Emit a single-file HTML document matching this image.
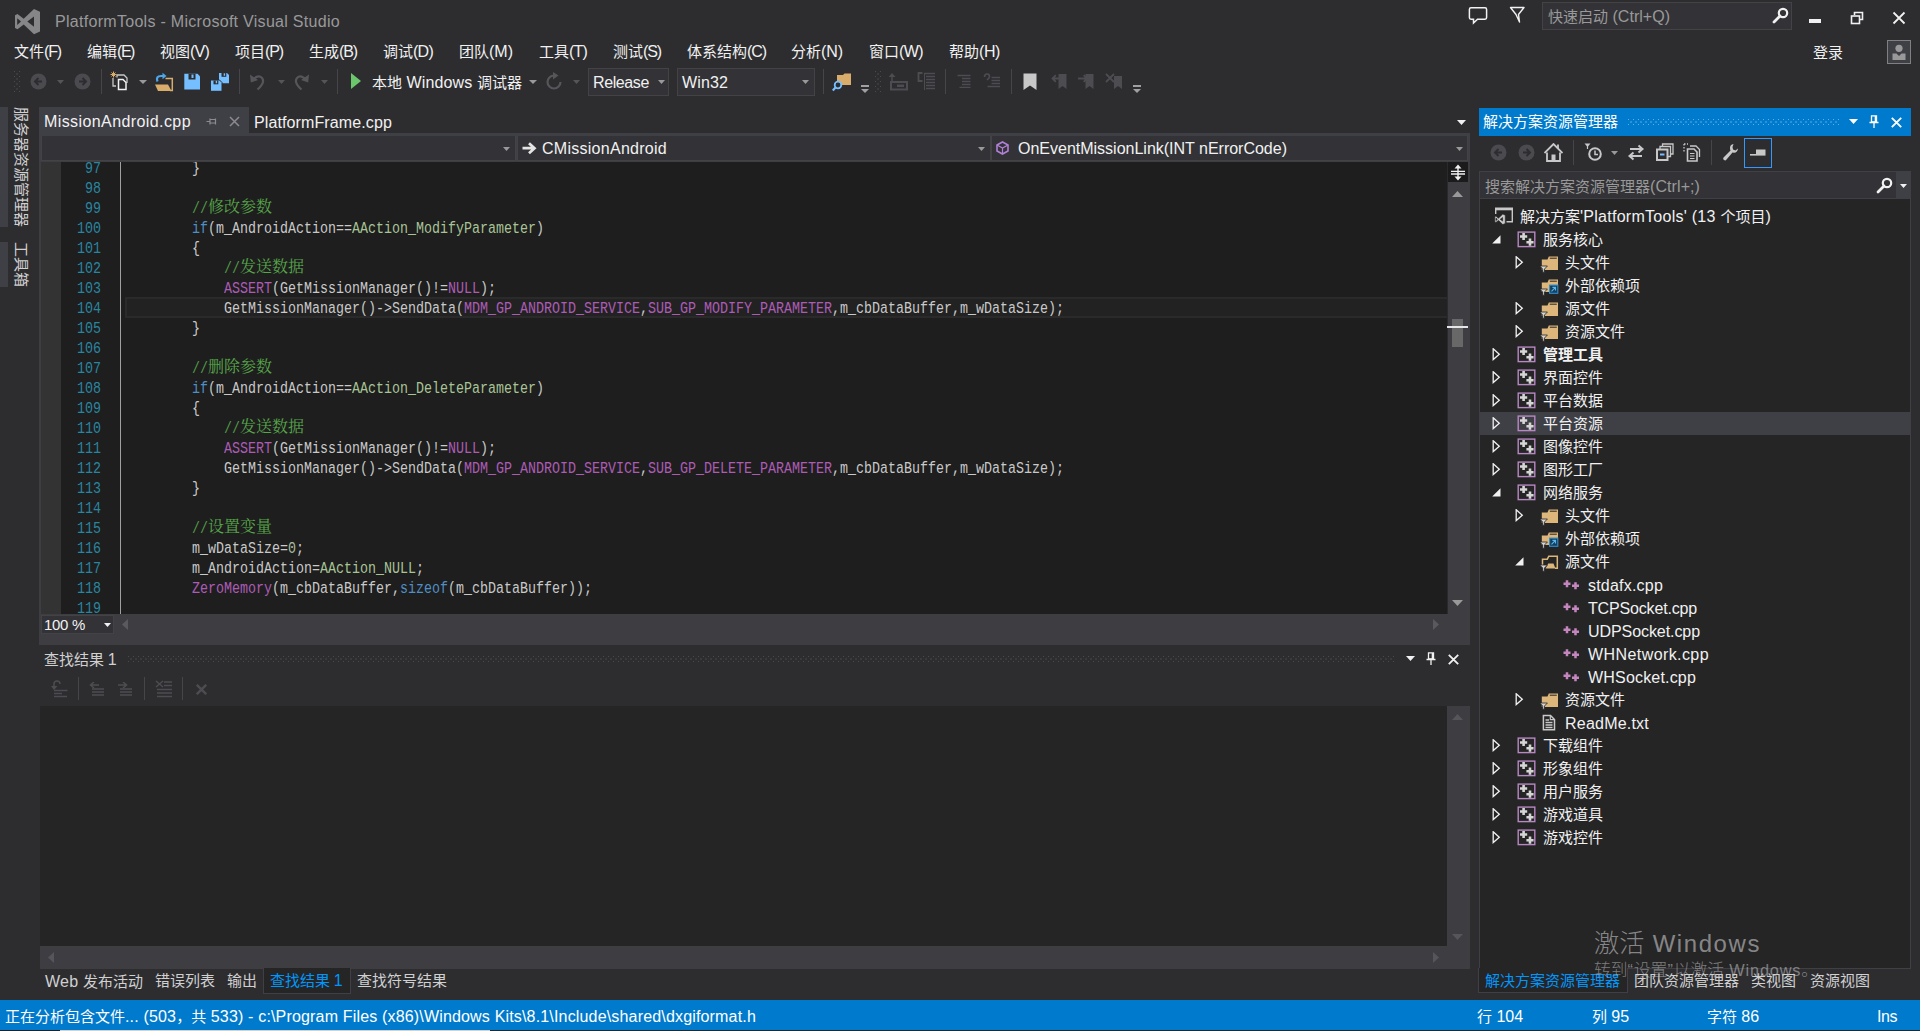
<!DOCTYPE html>
<html lang="zh-CN"><head><meta charset="utf-8"><title>PlatformTools - Microsoft Visual Studio</title>
<style>
html,body{margin:0;padding:0;}
body{width:1920px;height:1031px;overflow:hidden;background:#2d2d30;position:relative;font-family:"Liberation Sans","Noto Sans CJK SC",sans-serif;font-size:15px;color:#f1f1f1;}
div,svg,span.a{position:absolute;box-sizing:border-box;}
.t{white-space:pre;}
.m{white-space:pre;font-family:"Liberation Mono","Noto Sans CJK SC",monospace;font-size:16.667px;line-height:20px;transform-origin:0 50%;transform:scaleX(.8);color:#dcdcdc;opacity:.9;}
.c{white-space:pre;font-family:"Noto Serif CJK SC","Noto Sans CJK SC",serif;font-size:16px;line-height:20px;color:#57a64a;}
.k{color:#569cd6}.p{color:#bd63c5}.e{color:#b8d7a3}.g{color:#57a64a}.n{color:#b5cea8}
</style></head><body>

<svg style="left:14px;top:8px;" width="27" height="27" viewBox="0 0 27 27"><path fill-rule="evenodd" fill="#868689" d="M20 1L26 3.7V23.5L20 26.2L9.7 16.5L3.5 21.2L1 20V7.3L3.5 6L9.7 10.8ZM3.2 10.3V17L7 13.6ZM20 8.5L13.3 13.6L20 18.7Z"/></svg>
<div class="t" style="left:55px;top:10px;line-height:22px;font-size:15px;color:#999;"><span class="l" style="font-size:16.05px;letter-spacing:0.279px">PlatformTools - Microsoft Visual Studio</span></div>
<svg style="left:1468px;top:6px;" width="20" height="20" viewBox="0 0 20 20"><path d="M3 1.8H17Q18.6 1.8 18.6 3.4V11.6Q18.6 13.2 17 13.2H9.5L5.5 17V13.2H3Q1.4 13.2 1.4 11.6V3.4Q1.4 1.8 3 1.8Z" fill="none" stroke="#f1f1f1" stroke-width="1.5"/></svg>
<svg style="left:1509px;top:6px;" width="17" height="18" viewBox="0 0 17 18"><path d="M1.5 1.5H15L9.5 8.5L10.5 16L7 8.5Z" fill="none" stroke="#f1f1f1" stroke-width="1.4" stroke-linejoin="round"/></svg>
<div style="left:1542px;top:2px;width:250px;height:28px;background:#333337;border:1px solid #434346;"></div>
<div class="t" style="left:1548px;top:6px;line-height:20px;font-size:15px;color:#999;">快速启动<span class="l" style="font-size:16.05px;letter-spacing:0.009px"> (Ctrl+Q)</span></div>
<svg style="left:1772px;top:7px;" width="17" height="17" viewBox="0 0 17 17"><circle cx="11" cy="6" r="4.2" fill="none" stroke="#f1f1f1" stroke-width="2.2"/><path d="M8 9L2 15" stroke="#f1f1f1" stroke-width="2.8" stroke-linecap="round"/></svg>
<div style="left:1809px;top:19px;width:12px;height:4px;background:#f1f1f1;"></div>
<svg style="left:1850px;top:11px;" width="14" height="14" viewBox="0 0 14 14"><path d="M4.5 4V1.5H12.5V8.500H10" fill="none" stroke="#f1f1f1" stroke-width="1.6"/><rect x="1.500" y="5" width="8" height="7.500" fill="none" stroke="#f1f1f1" stroke-width="1.6"/></svg>
<svg style="left:1892px;top:11px;" width="14" height="14" viewBox="0 0 14 14"><path d="M1.5 1.5L12.5 12.5M12.5 1.5L1.5 12.5" stroke="#f1f1f1" stroke-width="1.8"/></svg>
<div class="t" style="left:1813px;top:43px;line-height:20px;font-size:15px;color:#f1f1f1;">登录</div>
<div style="left:1887px;top:40px;width:24px;height:24px;background:#3f3f46;border:1px solid #808080;"></div>
<svg style="left:1889px;top:42px;" width="20" height="20" viewBox="0 0 20 20"><circle cx="10" cy="6.3" r="3.6" fill="#999"/><path d="M3.5 18V11.500H7.500L10 14L12.5 11.500H16.5V18Z" fill="#999"/></svg>
<div class="t" style="left:14px;top:41px;line-height:20px;font-size:15px;color:#f1f1f1;">文件<span class="l" style="font-size:16.05px;letter-spacing:-1.167px">(F)</span></div>
<div class="t" style="left:87px;top:41px;line-height:20px;font-size:15px;color:#f1f1f1;">编辑<span class="l" style="font-size:16.05px;letter-spacing:-1.464px">(E)</span></div>
<div class="t" style="left:160px;top:41px;line-height:20px;font-size:15px;color:#f1f1f1;">视图<span class="l" style="font-size:16.05px;letter-spacing:-0.797px">(V)</span></div>
<div class="t" style="left:235px;top:41px;line-height:20px;font-size:15px;color:#f1f1f1;">项目<span class="l" style="font-size:16.05px;letter-spacing:-1.13px">(P)</span></div>
<div class="t" style="left:309px;top:41px;line-height:20px;font-size:15px;color:#f1f1f1;">生成<span class="l" style="font-size:16.05px;letter-spacing:-1.13px">(B)</span></div>
<div class="t" style="left:383px;top:41px;line-height:20px;font-size:15px;color:#f1f1f1;">调试<span class="l" style="font-size:16.05px;letter-spacing:-0.76px">(D)</span></div>
<div class="t" style="left:459px;top:41px;line-height:20px;font-size:15px;color:#f1f1f1;">团队<span class="l" style="font-size:16.05px;letter-spacing:-0.016px">(M)</span></div>
<div class="t" style="left:539px;top:41px;line-height:20px;font-size:15px;color:#f1f1f1;">工具<span class="l" style="font-size:16.05px;letter-spacing:-0.833px">(T)</span></div>
<div class="t" style="left:613px;top:41px;line-height:20px;font-size:15px;color:#f1f1f1;">测试<span class="l" style="font-size:16.05px;letter-spacing:-1.13px">(S)</span></div>
<div class="t" style="left:687px;top:41px;line-height:20px;font-size:15px;color:#f1f1f1;">体系结构<span class="l" style="font-size:16.05px;letter-spacing:-1.094px">(C)</span></div>
<div class="t" style="left:791px;top:41px;line-height:20px;font-size:15px;color:#f1f1f1;">分析<span class="l" style="font-size:16.05px;letter-spacing:-0.094px">(N)</span></div>
<div class="t" style="left:869px;top:41px;line-height:20px;font-size:15px;color:#f1f1f1;">窗口<span class="l" style="font-size:16.05px;letter-spacing:-0.609px">(W)</span></div>
<div class="t" style="left:949px;top:41px;line-height:20px;font-size:15px;color:#f1f1f1;">帮助<span class="l" style="font-size:16.05px;letter-spacing:-0.427px">(H)</span></div>
<svg style="left:14px;top:71px;shape-rendering:crispEdges;" width="6" height="21" viewBox="0 0 6 21"><defs><pattern id="gp1" width="5" height="5" patternUnits="userSpaceOnUse"><rect width="1" height="1" fill="#4a4a4f"/><rect x="2" y="2" width="2" height="2" fill="#4a4a4f" opacity=".45"/></pattern></defs><rect width="6" height="21" fill="url(#gp1)"/></svg>
<svg style="left:29.5px;top:73.0px;" width="17" height="17" viewBox="0 0 17 17"><circle cx="8.5" cy="8.5" r="8" fill="#4b4b4f"/><path d="M12 8.5H5.5M8.5 5L5 8.5L8.5 12" fill="none" stroke="#2d2d30" stroke-width="2"/></svg>
<svg style="left:56.5px;top:80.0px;" width="7" height="4" viewBox="0 0 7 4"><path d="M0 0H7L3.5 4Z" fill="#555558"/></svg>
<svg style="left:73.5px;top:73.0px;" width="17" height="17" viewBox="0 0 17 17"><circle cx="8.5" cy="8.5" r="8" fill="#4b4b4f"/><path d="M5 8.5H11.5M8.5 5L12 8.5L8.5 12" fill="none" stroke="#2d2d30" stroke-width="2"/></svg>
<div style="left:101px;top:69px;width:1px;height:25px;background:#46464a;"></div>
<svg style="left:110px;top:71px;" width="20" height="20" viewBox="0 0 20 20"><path d="M3 7V15H6" fill="none" stroke="#c8c8c8" stroke-width="1.3"/><path d="M7 6.500V4H14L17 7V12" fill="none" stroke="#c8c8c8" stroke-width="1.3"/><path d="M8.500 8.500H13L16 11.500V18.500H8.500Z" fill="none" stroke="#f1f1f1" stroke-width="1.5"/><path d="M3.500 0.500V6.500M0.500 3.500H6.500M1.500 1.500L5.500 5.500M5.500 1.500L1.500 5.500" stroke="#d8ac6a" stroke-width="1"/></svg>
<svg style="left:139.0px;top:79.5px;" width="8" height="4" viewBox="0 0 8 4"><path d="M0 0H8L4.0 4Z" fill="#999"/></svg>
<svg style="left:154px;top:71px;" width="20" height="21" viewBox="0 0 20 21"><path d="M11.500 7.500H18.300V19.500H16" fill="none" stroke="#d8ac6a" stroke-width="1.500"/><path d="M1 13.500H14L17.500 20H4Z" fill="#d8ac6a"/><path d="M3.500 10.500Q1.500 5 7 5H9.500" fill="none" stroke="#4ea6ea" stroke-width="2.200"/><path d="M8.500 1.800L12.500 5L8.500 8.200Z" fill="#4ea6ea"/></svg>
<svg style="left:184px;top:73px;" width="17" height="17" viewBox="0 0 17 17"><path d="M0.300 0.800H13.500L16 3.300V16.500H0.300Z" fill="#75beff"/><rect x="4.500" y="0.800" width="7" height="5.700" fill="#2d2d30"/><rect x="7.500" y="1.500" width="2" height="3.500" fill="#75beff"/></svg>
<svg style="left:210px;top:71px;" width="20" height="20" viewBox="0 0 20 20"><path d="M9 2H17L19 4V12.300H9Z" fill="#75beff"/><rect x="11.500" y="2" width="4.800" height="3.800" fill="#2d2d30"/><rect x="13.700" y="2.300" width="1.400" height="2.500" fill="#75beff"/><path d="M0.500 9H9.500L12 11.500V20.300H0.500Z" fill="#75beff" stroke="#2d2d30" stroke-width="1"/><rect x="3.500" y="9.500" width="4.800" height="3.800" fill="#2d2d30"/><rect x="5.700" y="9.800" width="1.400" height="2.500" fill="#75beff"/></svg>
<div style="left:239px;top:69px;width:1px;height:25px;background:#46464a;"></div>
<svg style="left:249px;top:72px;" width="17" height="19" viewBox="0 0 17 19"><path d="M3 8.500Q9 2 13 6Q16.5 10.500 8.500 17.500" fill="none" stroke="#55555a" stroke-width="2.200"/><path d="M1 2.500L1.800 10.500L9 8Z" fill="#55555a"/></svg>
<svg style="left:277.5px;top:80.0px;" width="7" height="4" viewBox="0 0 7 4"><path d="M0 0H7L3.5 4Z" fill="#555558"/></svg>
<svg style="left:293px;top:72px;" width="17" height="19" viewBox="0 0 17 19"><path d="M14 8.500Q8 2 4 6Q0.500 10.500 8.500 17.500" fill="none" stroke="#55555a" stroke-width="2.200"/><path d="M16 2.500L15.200 10.500L8 8Z" fill="#55555a"/></svg>
<svg style="left:320.5px;top:80.0px;" width="7" height="4" viewBox="0 0 7 4"><path d="M0 0H7L3.5 4Z" fill="#555558"/></svg>
<div style="left:337px;top:69px;width:1px;height:25px;background:#46464a;"></div>
<svg style="left:350px;top:72px;" width="12" height="18" viewBox="0 0 12 18"><path d="M1 1L11 9L1 17Z" fill="#6cc66c"/></svg>
<div class="t" style="left:372px;top:72px;line-height:20px;font-size:15px;color:#f1f1f1;">本地<span class="l" style="font-size:16.05px;letter-spacing:0.113px"> Windows </span>调试器</div>
<svg style="left:528.5px;top:79.5px;" width="8" height="4" viewBox="0 0 8 4"><path d="M0 0H8L4.0 4Z" fill="#999"/></svg>
<svg style="left:545px;top:72px;" width="18" height="19" viewBox="0 0 18 19"><path d="M9 3.500A6.500 6.500 0 1 0 15.500 10" fill="none" stroke="#55555a" stroke-width="2.200"/><path d="M8 0L13.500 3.500L8 7.500Z" fill="#55555a"/></svg>
<svg style="left:572.5px;top:80.0px;" width="7" height="4" viewBox="0 0 7 4"><path d="M0 0H7L3.5 4Z" fill="#555558"/></svg>
<div style="left:588px;top:68px;width:81px;height:28px;background:#333337;border:1px solid #434346;"></div>
<div class="t" style="left:593px;top:72px;line-height:20px;font-size:15px;color:#f1f1f1;"><span class="l" style="font-size:16.05px;letter-spacing:-0.404px">Release</span></div>
<svg style="left:657.5px;top:80.0px;" width="7" height="4" viewBox="0 0 7 4"><path d="M0 0H7L3.5 4Z" fill="#999"/></svg>
<div style="left:677px;top:68px;width:138px;height:28px;background:#333337;border:1px solid #434346;"></div>
<div class="t" style="left:682px;top:72px;line-height:20px;font-size:15px;color:#f1f1f1;"><span class="l" style="font-size:16.05px;letter-spacing:0.109px">Win32</span></div>
<svg style="left:801.5px;top:80.0px;" width="7" height="4" viewBox="0 0 7 4"><path d="M0 0H7L3.5 4Z" fill="#999"/></svg>
<div style="left:823px;top:69px;width:1px;height:25px;background:#46464a;"></div>
<svg style="left:832px;top:71px;" width="21" height="21" viewBox="0 0 21 21"><path d="M5 4H11L12.5 2.500H19V14H5Z" fill="#d8ac6a"/><circle cx="6" cy="14" r="3.300" fill="#2d2d30" stroke="#75beff" stroke-width="1.800"/><path d="M3.500 16.500L0.800 19.500" stroke="#75beff" stroke-width="2.200"/></svg>
<div style="left:861px;top:85px;width:8px;height:1.5px;background:#a0a0a0;"></div>
<svg style="left:861.0px;top:88.5px;" width="8" height="4" viewBox="0 0 8 4"><path d="M0 0H8L4.0 4Z" fill="#a0a0a0"/></svg>
<svg style="left:875px;top:71px;shape-rendering:crispEdges;" width="6" height="21" viewBox="0 0 6 21"><defs><pattern id="gp2" width="5" height="5" patternUnits="userSpaceOnUse"><rect width="1" height="1" fill="#4a4a4f"/><rect x="2" y="2" width="2" height="2" fill="#4a4a4f" opacity=".45"/></pattern></defs><rect width="6" height="21" fill="url(#gp2)"/></svg>
<svg style="left:889px;top:73px;" width="19" height="18" viewBox="0 0 19 18"><path d="M3 0L6.500 4H-0.500Z" fill="#4d4d51"/><path d="M3 4V9" stroke="#4d4d51" stroke-width="1.500"/><rect x="2" y="9" width="16" height="7.500" fill="none" stroke="#4d4d51" stroke-width="2"/><rect x="8" y="11.500" width="7" height="2.500" fill="#4d4d51"/></svg>
<svg style="left:917px;top:72px;" width="19" height="19" viewBox="0 0 19 19"><path d="M5.500 1H1.500V9H5.500" fill="none" stroke="#4d4d51" stroke-width="1.800"/><path d="M7 1.500H18M9 4.500H18M9 7.500H18M9 10.500H18M9 13.500H18M9 16.500H18" stroke="#4d4d51" stroke-width="1.300"/><path d="M7.500 1V18" stroke="#4d4d51" stroke-width="1"/></svg>
<div style="left:945px;top:69px;width:1px;height:25px;background:#46464a;"></div>
<svg style="left:957px;top:74px;" width="15" height="14" viewBox="0 0 15 14"><path d="M0.500 1.500H13.500M5 4.500H13.500M5 7.500H13.500M5 10.500H13.500M2.500 13.500H13.500" stroke="#4d4d51" stroke-width="1.300"/></svg>
<svg style="left:983px;top:73px;" width="18" height="16" viewBox="0 0 18 16"><path d="M1.500 4Q1.500 1 4 1Q6.500 1 6.500 3.500Q6.500 5 4 7" fill="none" stroke="#4d4d51" stroke-width="1.600"/><path d="M8.500 4.500H17M8.500 7.500H17M8.500 10.500H17M4.500 13.500H17" stroke="#4d4d51" stroke-width="1.300"/></svg>
<div style="left:1011px;top:69px;width:1px;height:25px;background:#46464a;"></div>
<svg style="left:1023px;top:73px;" width="14" height="18" viewBox="0 0 14 18"><path d="M0.500 0.500H13.500V17L7 12.500L0.500 17Z" fill="#c8c8c8"/></svg>
<svg style="left:1051px;top:73px;" width="17" height="17" viewBox="0 0 17 17"><path d="M7.500 1H15.500V16L11.500 13L7.500 16Z" fill="#4d4d51"/><path d="M10 5.500H1.500M4.800 2.200L1.500 5.500L4.800 8.800" fill="none" stroke="#4d4d51" stroke-width="1.800"/><path d="M10 5.500H6" stroke="#2d2d30" stroke-width="0"/></svg>
<svg style="left:1077px;top:73px;" width="18" height="17" viewBox="0 0 18 17"><path d="M8.500 1H16.500V16L12.500 13L8.500 16Z" fill="#4d4d51"/><path d="M1 5.500H10M6.700 2.200L10 5.500L6.700 8.800" fill="none" stroke="#4d4d51" stroke-width="1.800"/></svg>
<svg style="left:1105px;top:73px;" width="18" height="17" viewBox="0 0 18 17"><path d="M9 3H17V16L13 13L9 16Z" fill="#4d4d51"/><path d="M1 1L9 9M9 1L1 9" fill="none" stroke="#4d4d51" stroke-width="1.800"/></svg>
<div style="left:1133px;top:85px;width:8px;height:1.5px;background:#a0a0a0;"></div>
<svg style="left:1133.0px;top:88.5px;" width="8" height="4" viewBox="0 0 8 4"><path d="M0 0H8L4.0 4Z" fill="#a0a0a0"/></svg>
<div style="left:0px;top:107px;width:8px;height:120px;background:#3f3f46;"></div>
<div style="left:0px;top:242px;width:8px;height:45px;background:#3f3f46;"></div>
<div class="t" style="left:29px;top:107px;font-size:15px;line-height:16px;color:#d0d0d0;transform-origin:0 0;transform:rotate(90deg);">服务器资源管理器</div>
<div class="t" style="left:29px;top:242px;font-size:15px;line-height:16px;color:#d0d0d0;transform-origin:0 0;transform:rotate(90deg);">工具箱</div>
<div style="left:39px;top:107px;width:210px;height:26px;background:#3f3f46;"></div>
<div style="left:39px;top:133px;width:1431px;height:3px;background:#3f3f46;"></div>
<div class="t" style="left:44px;top:111px;line-height:20px;font-size:15px;color:#f1f1f1;"><span class="l" style="font-size:16.05px;letter-spacing:0.394px">MissionAndroid.cpp</span></div>
<svg style="left:206px;top:116px;" width="11" height="11" viewBox="0 0 11 11"><path d="M0.500 5.500H4M4 2.500V8.500M4 3.500H9.500V7H4M9.500 2.500V8.500" fill="none" stroke="#8b8b90" stroke-width="1.200"/></svg>
<svg style="left:229px;top:116px;" width="11" height="11" viewBox="0 0 11 11"><path d="M1 1L10 10M10 1L1 10" stroke="#8b8b90" stroke-width="1.500"/></svg>
<div class="t" style="left:254px;top:112px;line-height:20px;font-size:15px;color:#f1f1f1;"><span class="l" style="font-size:16.05px;letter-spacing:0.099px">PlatformFrame.cpp</span></div>
<svg style="left:1456.5px;top:120.0px;" width="9" height="5" viewBox="0 0 9 5"><path d="M0 0H9L4.5 5Z" fill="#f1f1f1"/></svg>
<div style="left:39px;top:136px;width:1431px;height:25px;background:#3f3f46;"></div>
<div style="left:41px;top:136px;width:475px;height:25px;background:#333337;border:1px solid #434346;border-top:none;"></div>
<div style="left:517px;top:136px;width:474px;height:25px;background:#333337;border:1px solid #434346;border-top:none;"></div>
<div style="left:991px;top:136px;width:477px;height:25px;background:#333337;border:1px solid #434346;border-top:none;"></div>
<svg style="left:502.5px;top:147.0px;" width="7" height="4" viewBox="0 0 7 4"><path d="M0 0H7L3.5 4Z" fill="#999"/></svg>
<svg style="left:977.5px;top:147.0px;" width="7" height="4" viewBox="0 0 7 4"><path d="M0 0H7L3.5 4Z" fill="#999"/></svg>
<svg style="left:1455.5px;top:147.0px;" width="7" height="4" viewBox="0 0 7 4"><path d="M0 0H7L3.5 4Z" fill="#999"/></svg>
<svg style="left:522px;top:142px;" width="15" height="13" viewBox="0 0 15 13"><path d="M0.500 6.200H12M7 1.200L12.500 6.200L7 11.200" fill="none" stroke="#e4e4e4" stroke-width="2.700"/></svg>
<div class="t" style="left:542px;top:138px;line-height:20px;font-size:15px;color:#f1f1f1;"><span class="l" style="font-size:16.05px;letter-spacing:0.254px">CMissionAndroid</span></div>
<svg style="left:996px;top:141px;" width="13" height="14" viewBox="0 0 13 14"><path d="M6.500 1L12 4V10L6.500 13L1 10V4Z" fill="none" stroke="#b180d7" stroke-width="1.600"/><path d="M1 4L6.500 7L12 4M6.500 7V13" fill="none" stroke="#b180d7" stroke-width="1.200"/></svg>
<div class="t" style="left:1018px;top:138px;line-height:20px;font-size:15px;color:#f1f1f1;"><span class="l" style="font-size:16.05px;letter-spacing:-0.02px">OnEventMissionLink(INT nErrorCode)</span></div>
<div style="left:39px;top:161px;width:1431px;height:484px;background:#3e3e42;"></div>
<div style="left:41px;top:162px;width:1406px;height:452px;background:#1e1e1e;"></div>
<div style="left:41px;top:162px;width:20px;height:452px;background:#333333;"></div>
<div style="left:120px;top:162px;width:1px;height:452px;background:#a0a0a0;"></div>
<div style="left:125px;top:297px;width:1322px;height:21px;background:#222222;border:2px solid #2a2a2a;border-right:none;"></div>
<div style="left:41px;top:162px;width:1406px;height:452px;overflow:hidden;">
<div class="m" style="left:44px;top:-3.5px;color:#2b91af;">97</div>
<div class="m" style="left:151px;top:-3.5px;">}</div>
<div class="m" style="left:44px;top:16.5px;color:#2b91af;">98</div>
<div class="m" style="left:44px;top:36.5px;color:#2b91af;">99</div>
<div class="m g" style="left:151px;top:36.5px;">//</div>
<div class="c" style="left:167px;top:33.5px;">修改参数</div>
<div class="m" style="left:36px;top:56.5px;color:#2b91af;">100</div>
<div class="m k" style="left:151px;top:56.5px;">if</div>
<div class="m" style="left:167px;top:56.5px;">(m_AndroidAction==</div>
<div class="m e" style="left:311px;top:56.5px;">AAction_ModifyParameter</div>
<div class="m" style="left:495px;top:56.5px;">)</div>
<div class="m" style="left:36px;top:76.5px;color:#2b91af;">101</div>
<div class="m" style="left:151px;top:76.5px;">{</div>
<div class="m" style="left:36px;top:96.5px;color:#2b91af;">102</div>
<div class="m g" style="left:183px;top:96.5px;">//</div>
<div class="c" style="left:199px;top:93.5px;">发送数据</div>
<div class="m" style="left:36px;top:116.5px;color:#2b91af;">103</div>
<div class="m p" style="left:183px;top:116.5px;">ASSERT</div>
<div class="m" style="left:231px;top:116.5px;">(GetMissionManager()!=</div>
<div class="m p" style="left:407px;top:116.5px;">NULL</div>
<div class="m" style="left:439px;top:116.5px;">);</div>
<div class="m" style="left:36px;top:136.5px;color:#2b91af;">104</div>
<div class="m" style="left:183px;top:136.5px;">GetMissionManager()-&gt;SendData(</div>
<div class="m p" style="left:423px;top:136.5px;">MDM_GP_ANDROID_SERVICE</div>
<div class="m" style="left:599px;top:136.5px;">,</div>
<div class="m p" style="left:607px;top:136.5px;">SUB_GP_MODIFY_PARAMETER</div>
<div class="m" style="left:791px;top:136.5px;">,m_cbDataBuffer,m_wDataSize);</div>
<div class="m" style="left:36px;top:156.5px;color:#2b91af;">105</div>
<div class="m" style="left:151px;top:156.5px;">}</div>
<div class="m" style="left:36px;top:176.5px;color:#2b91af;">106</div>
<div class="m" style="left:36px;top:196.5px;color:#2b91af;">107</div>
<div class="m g" style="left:151px;top:196.5px;">//</div>
<div class="c" style="left:167px;top:193.5px;">删除参数</div>
<div class="m" style="left:36px;top:216.5px;color:#2b91af;">108</div>
<div class="m k" style="left:151px;top:216.5px;">if</div>
<div class="m" style="left:167px;top:216.5px;">(m_AndroidAction==</div>
<div class="m e" style="left:311px;top:216.5px;">AAction_DeleteParameter</div>
<div class="m" style="left:495px;top:216.5px;">)</div>
<div class="m" style="left:36px;top:236.5px;color:#2b91af;">109</div>
<div class="m" style="left:151px;top:236.5px;">{</div>
<div class="m" style="left:36px;top:256.5px;color:#2b91af;">110</div>
<div class="m g" style="left:183px;top:256.5px;">//</div>
<div class="c" style="left:199px;top:253.5px;">发送数据</div>
<div class="m" style="left:36px;top:276.5px;color:#2b91af;">111</div>
<div class="m p" style="left:183px;top:276.5px;">ASSERT</div>
<div class="m" style="left:231px;top:276.5px;">(GetMissionManager()!=</div>
<div class="m p" style="left:407px;top:276.5px;">NULL</div>
<div class="m" style="left:439px;top:276.5px;">);</div>
<div class="m" style="left:36px;top:296.5px;color:#2b91af;">112</div>
<div class="m" style="left:183px;top:296.5px;">GetMissionManager()-&gt;SendData(</div>
<div class="m p" style="left:423px;top:296.5px;">MDM_GP_ANDROID_SERVICE</div>
<div class="m" style="left:599px;top:296.5px;">,</div>
<div class="m p" style="left:607px;top:296.5px;">SUB_GP_DELETE_PARAMETER</div>
<div class="m" style="left:791px;top:296.5px;">,m_cbDataBuffer,m_wDataSize);</div>
<div class="m" style="left:36px;top:316.5px;color:#2b91af;">113</div>
<div class="m" style="left:151px;top:316.5px;">}</div>
<div class="m" style="left:36px;top:336.5px;color:#2b91af;">114</div>
<div class="m" style="left:36px;top:356.5px;color:#2b91af;">115</div>
<div class="m g" style="left:151px;top:356.5px;">//</div>
<div class="c" style="left:167px;top:353.5px;">设置变量</div>
<div class="m" style="left:36px;top:376.5px;color:#2b91af;">116</div>
<div class="m" style="left:151px;top:376.5px;">m_wDataSize=</div>
<div class="m n" style="left:247px;top:376.5px;">0</div>
<div class="m" style="left:255px;top:376.5px;">;</div>
<div class="m" style="left:36px;top:396.5px;color:#2b91af;">117</div>
<div class="m" style="left:151px;top:396.5px;">m_AndroidAction=</div>
<div class="m e" style="left:279px;top:396.5px;">AAction_NULL</div>
<div class="m" style="left:375px;top:396.5px;">;</div>
<div class="m" style="left:36px;top:416.5px;color:#2b91af;">118</div>
<div class="m p" style="left:151px;top:416.5px;">ZeroMemory</div>
<div class="m" style="left:231px;top:416.5px;">(m_cbDataBuffer,</div>
<div class="m k" style="left:359px;top:416.5px;">sizeof</div>
<div class="m" style="left:407px;top:416.5px;">(m_cbDataBuffer));</div>
<div class="m" style="left:36px;top:436.5px;color:#2b91af;">119</div>
</div>
<div style="left:1447px;top:162px;width:1px;height:452px;background:#2a2a2c;"></div>
<div style="left:1448px;top:162px;width:20px;height:20px;background:#1b1b1c;"></div>
<svg style="left:1451px;top:164px;" width="14" height="17" viewBox="0 0 14 17"><path d="M7 0.500L10.500 4.500H3.500ZM7 16.500L10.500 12.500H3.500Z" fill="#f1f1f1"/><path d="M7 3V14" stroke="#f1f1f1" stroke-width="1.400"/><path d="M0 7.300H14M0 10H14" stroke="#f1f1f1" stroke-width="1.300"/></svg>
<svg style="left:1452.0px;top:191.0px;" width="11" height="6" viewBox="0 0 11 6"><path d="M0 6H11L5.5 0Z" fill="#999"/></svg>
<svg style="left:1452.0px;top:600.0px;" width="11" height="6" viewBox="0 0 11 6"><path d="M0 0H11L5.5 6Z" fill="#999"/></svg>
<div style="left:1452px;top:319px;width:11px;height:28px;background:#686868;"></div>
<div style="left:1447px;top:326px;width:21px;height:2px;background:#e6e6e6;"></div>
<div style="left:41px;top:615px;width:73px;height:19px;background:#333337;border:1px solid #434346;"></div>
<div class="t" style="left:44px;top:614.5px;line-height:20px;font-size:14px;color:#f1f1f1;"><span class="l" style="font-size:14.98px;letter-spacing:-0.291px">100 %</span></div>
<svg style="left:103.5px;top:623.0px;" width="7" height="4" viewBox="0 0 7 4"><path d="M0 0H7L3.5 4Z" fill="#f1f1f1"/></svg>
<svg style="left:122.0px;top:619.0px;" width="6" height="11" viewBox="0 0 6 11"><path d="M6 0V11L0 5.5Z" fill="#5a5a5e"/></svg>
<svg style="left:1433.0px;top:619.0px;" width="6" height="11" viewBox="0 0 6 11"><path d="M0 0V11L6 5.5Z" fill="#5a5a5e"/></svg>
<div style="left:40px;top:672px;width:1430px;height:34px;background:#2d2d30;"></div>
<div class="t" style="left:44px;top:649px;line-height:20px;font-size:15px;color:#d0d0d0;">查找结果<span class="l" style="font-size:16.05px;letter-spacing:-0.695px"> 1</span></div>
<svg style="left:128px;top:656px;shape-rendering:crispEdges;" width="1266" height="6" viewBox="0 0 1266 6"><defs><pattern id="gp3" width="5" height="5" patternUnits="userSpaceOnUse"><rect width="1" height="1" fill="#4a4a4f"/><rect x="2" y="2" width="2" height="2" fill="#4a4a4f" opacity=".45"/></pattern></defs><rect width="1266" height="6" fill="url(#gp3)"/></svg>
<svg style="left:1406.0px;top:656.0px;" width="9" height="5" viewBox="0 0 9 5"><path d="M0 0H9L4.5 5Z" fill="#f1f1f1"/></svg>
<svg style="left:1426px;top:652px;" width="10" height="13" viewBox="0 0 10 13"><path d="M2.500 0.800H7.500V7H2.500Z" fill="none" stroke="#f1f1f1" stroke-width="1.300"/><path d="M6.500 1V7" stroke="#f1f1f1" stroke-width="1.600"/><path d="M0.500 7.500H9.500M5 7.500V13" stroke="#f1f1f1" stroke-width="1.300"/></svg>
<svg style="left:1447.5px;top:653.5px;" width="11" height="11" viewBox="0 0 11 11"><path d="M0.800 0.800L10.2 10.2M10.2 0.800L0.800 10.2" stroke="#f1f1f1" stroke-width="1.8"/></svg>
<svg style="left:51px;top:680px;" width="17" height="18" viewBox="0 0 17 18"><path d="M9 4Q9 1 6 1Q3 1 3 4V8" fill="none" stroke="#4d4d51" stroke-width="1.500"/><path d="M0 6L3 10L6.500 6Z" fill="#4d4d51"/><path d="M3 10.500H16.500M3 13.500H11M3 16.500H16" stroke="#4d4d51" stroke-width="1.500"/></svg>
<div style="left:78px;top:677px;width:1px;height:23px;background:#46464a;"></div>
<svg style="left:89px;top:682px;" width="16" height="14" viewBox="0 0 16 14"><path d="M10 3H2M5 0L1.500 3L5 6" fill="none" stroke="#4d4d51" stroke-width="1.600"/><path d="M3 7H15M3 10H15M3 13H15" stroke="#4d4d51" stroke-width="1.500"/></svg>
<svg style="left:117px;top:682px;" width="16" height="14" viewBox="0 0 16 14"><path d="M1 3H9M6 0L9.500 3L6 6" fill="none" stroke="#4d4d51" stroke-width="1.600"/><path d="M3 7H15M3 10H15M3 13H15" stroke="#4d4d51" stroke-width="1.500"/></svg>
<div style="left:144px;top:677px;width:1px;height:23px;background:#46464a;"></div>
<svg style="left:155px;top:680px;" width="18" height="18" viewBox="0 0 18 18"><path d="M1 1L8 7M8 1L1 7" stroke="#4d4d51" stroke-width="1.500"/><path d="M9 2H17M9 5.500H17M2 9.500H17M2 13H17M2 16.500H17" stroke="#4d4d51" stroke-width="1.600"/></svg>
<div style="left:182px;top:677px;width:1px;height:23px;background:#46464a;"></div>
<svg style="left:195.5px;top:683.5px;" width="11" height="11" viewBox="0 0 11 11"><path d="M0.800 0.800L10.2 10.2M10.2 0.800L0.800 10.2" stroke="#4d4d51" stroke-width="2.4"/></svg>
<div style="left:40px;top:706px;width:1407px;height:240px;background:#252526;"></div>
<div style="left:1447px;top:706px;width:23px;height:240px;background:#3e3e42;"></div>
<div style="left:40px;top:946px;width:1430px;height:23px;background:#3e3e42;"></div>
<svg style="left:1452.0px;top:713.5px;" width="11" height="6" viewBox="0 0 11 6"><path d="M0 6H11L5.5 0Z" fill="#55555a"/></svg>
<svg style="left:1452.0px;top:933.5px;" width="11" height="6" viewBox="0 0 11 6"><path d="M0 0H11L5.5 6Z" fill="#55555a"/></svg>
<svg style="left:48.0px;top:952.0px;" width="6" height="11" viewBox="0 0 6 11"><path d="M6 0V11L0 5.5Z" fill="#55555a"/></svg>
<svg style="left:1433.0px;top:952.0px;" width="6" height="11" viewBox="0 0 6 11"><path d="M0 0V11L6 5.5Z" fill="#55555a"/></svg>
<div style="left:263px;top:968px;width:88px;height:26px;background:#252526;border:1px solid #3f3f46;border-top:none;"></div>
<div class="t" style="left:45px;top:971px;line-height:20px;font-size:15px;color:#d0d0d0;"><span class="l" style="font-size:16.05px;letter-spacing:0.211px">Web </span>发布活动</div>
<div class="t" style="left:155px;top:971px;line-height:20px;font-size:15px;color:#d0d0d0;">错误列表</div>
<div class="t" style="left:227px;top:971px;line-height:20px;font-size:15px;color:#d0d0d0;">输出</div>
<div class="t" style="left:270px;top:970px;line-height:20px;font-size:15px;color:#0097fb;">查找结果<span class="l" style="font-size:16.05px;letter-spacing:-0.695px"> 1</span></div>
<div class="t" style="left:357px;top:971px;line-height:20px;font-size:15px;color:#d0d0d0;">查找符号结果</div>
<div style="left:1479px;top:108px;width:432px;height:28px;background:#007acc;"></div>
<div class="t" style="left:1483px;top:112px;line-height:20px;font-size:15px;color:#ffffff;">解决方案资源管理器</div>
<svg style="left:1628px;top:119px;shape-rendering:crispEdges;" width="211" height="6" viewBox="0 0 211 6"><defs><pattern id="gp4" width="5" height="5" patternUnits="userSpaceOnUse"><rect width="1" height="1" fill="#5fb0e8"/><rect x="2" y="2" width="2" height="2" fill="#5fb0e8" opacity=".45"/></pattern></defs><rect width="211" height="6" fill="url(#gp4)"/></svg>
<svg style="left:1848.5px;top:119.0px;" width="9" height="5" viewBox="0 0 9 5"><path d="M0 0H9L4.5 5Z" fill="#fff"/></svg>
<svg style="left:1869px;top:115px;" width="10" height="13" viewBox="0 0 10 13"><path d="M2.500 0.800H7.500V7H2.500Z" fill="none" stroke="#fff" stroke-width="1.300"/><path d="M6.500 1V7" stroke="#fff" stroke-width="1.600"/><path d="M0.500 7.500H9.500M5 7.500V13" stroke="#fff" stroke-width="1.300"/></svg>
<svg style="left:1890.5px;top:116.5px;" width="11" height="11" viewBox="0 0 11 11"><path d="M0.800 0.800L10.2 10.2M10.2 0.800L0.800 10.2" stroke="#fff" stroke-width="1.8"/></svg>
<svg style="left:1489.5px;top:144.0px;" width="17" height="17" viewBox="0 0 17 17"><circle cx="8.5" cy="8.5" r="8" fill="#4b4b4f"/><path d="M12 8.5H5.5M8.5 5L5 8.5L8.5 12" fill="none" stroke="#2d2d30" stroke-width="2"/></svg>
<svg style="left:1517.5px;top:144.0px;" width="17" height="17" viewBox="0 0 17 17"><circle cx="8.5" cy="8.5" r="8" fill="#4b4b4f"/><path d="M5 8.5H11.5M8.5 5L12 8.5L8.5 12" fill="none" stroke="#2d2d30" stroke-width="2"/></svg>
<svg style="left:1544px;top:143px;" width="19" height="19" viewBox="0 0 19 19"><path d="M0.500 10L9.500 1L18.500 10" fill="none" stroke="#c8c8c8" stroke-width="1.800"/><path d="M3 9.500V18H16V9.500" fill="none" stroke="#c8c8c8" stroke-width="1.800"/><rect x="7.500" y="11.500" width="4" height="6.500" fill="#c8c8c8"/><path d="M14 1.500V5.500" stroke="#c8c8c8" stroke-width="1.800"/></svg>
<div style="left:1573px;top:140px;width:1px;height:25px;background:#46464a;"></div>
<svg style="left:1584px;top:143px;" width="19" height="19" viewBox="0 0 19 19"><path d="M0.500 0.500H6.500L3.500 4Z" fill="#c8c8c8"/><path d="M3.500 3V6" stroke="#c8c8c8" stroke-width="1.200"/><circle cx="11" cy="11" r="5.800" fill="none" stroke="#c8c8c8" stroke-width="2"/><path d="M11 7.500V11.500H14" fill="none" stroke="#c8c8c8" stroke-width="1.500"/></svg>
<svg style="left:1611.0px;top:150.5px;" width="7" height="4" viewBox="0 0 7 4"><path d="M0 0H7L3.5 4Z" fill="#999"/></svg>
<svg style="left:1627px;top:144px;" width="18" height="17" viewBox="0 0 18 17"><path d="M3 5H15M11.500 1.500L15.500 5L11.500 8.500" fill="none" stroke="#c8c8c8" stroke-width="2"/><path d="M15 12H3M6.500 8.500L2.500 12L6.500 15.500" fill="none" stroke="#c8c8c8" stroke-width="2"/></svg>
<svg style="left:1656px;top:143px;" width="18" height="19" viewBox="0 0 18 19"><path d="M6.500 3.500V1H17V11H14.500" fill="none" stroke="#c8c8c8" stroke-width="1.300"/><path d="M4 6V3.500H14.500V13.500H12" fill="none" stroke="#c8c8c8" stroke-width="1.300"/><rect x="1" y="6.500" width="10.500" height="10.500" fill="none" stroke="#c8c8c8" stroke-width="2"/><rect x="4" y="10.500" width="4.500" height="2" fill="#75beff"/></svg>
<svg style="left:1683px;top:143px;" width="19" height="19" viewBox="0 0 19 19"><path d="M1 1H5M1 1V9" fill="none" stroke="#c8c8c8" stroke-width="1.300" stroke-dasharray="1.500 1.500"/><path d="M7 3H13L16.500 6.500V14" fill="none" stroke="#c8c8c8" stroke-width="1.300"/><path d="M4.500 6H11L14 9V18H4.500Z" fill="none" stroke="#c8c8c8" stroke-width="1.600"/><path d="M7 10.500H11.500M7 13H11.500M7 15.500H11.500" stroke="#c8c8c8" stroke-width="1.200"/></svg>
<div style="left:1711px;top:140px;width:1px;height:25px;background:#46464a;"></div>
<svg style="left:1722px;top:143px;" width="17" height="18" viewBox="0 0 17 18"><path d="M11.500 1Q8 1.500 8 5Q8 6.500 8.500 7.500L1.500 14.500Q0.500 16 2 17Q3.500 18 4.500 16.500L10.500 9.500Q15.500 10.500 16 5.500L13.500 7.500L11 6.500L10.500 4Z" fill="#c8c8c8"/></svg>
<div style="left:1744px;top:138px;width:28px;height:30px;background:#2d2d30;border:1px solid #3399ff;"></div>
<svg style="left:1750px;top:149px;" width="16" height="8" viewBox="0 0 16 8"><rect x="6" y="0.500" width="9.500" height="4.500" fill="#c8c8c8"/><path d="M0 5.800H15.500" stroke="#c8c8c8" stroke-width="1.600"/></svg>
<div style="left:1479px;top:171px;width:432px;height:28px;background:#333337;border:1px solid #3f3f46;"></div>
<div class="t" style="left:1485px;top:176px;line-height:20px;font-size:15px;color:#999;">搜索解决方案资源管理器<span class="l" style="font-size:16.05px;letter-spacing:0.068px">(Ctrl+;)</span></div>
<svg style="left:1876px;top:177px;" width="17" height="17" viewBox="0 0 17 17"><circle cx="11" cy="6" r="4.2" fill="none" stroke="#f1f1f1" stroke-width="2.2"/><path d="M8 9L2 15" stroke="#f1f1f1" stroke-width="2.8" stroke-linecap="round"/></svg>
<div style="left:1896px;top:172px;width:15px;height:26px;background:#3f3f46;"></div>
<svg style="left:1899.5px;top:183.5px;" width="7" height="4" viewBox="0 0 7 4"><path d="M0 0H7L3.5 4Z" fill="#f1f1f1"/></svg>
<div style="left:1479px;top:199px;width:432px;height:770px;background:#252526;border:1px solid #3f3f46;border-top:none;"></div>
<div style="left:1480px;top:412px;width:430px;height:23px;background:#3f3f46;"></div>
<svg style="left:1494px;top:207px;" width="20" height="19" viewBox="0 0 20 19"><rect x="1" y="0.500" width="18" height="2.800" fill="#c8c8c8"/><path d="M18.300 3V14.800H12.500" fill="none" stroke="#c8c8c8" stroke-width="1.400"/><path d="M1.700 3V7" stroke="#c8c8c8" stroke-width="1.400"/><g transform="translate(0.400,6.600) scale(0.420)"><path fill-rule="evenodd" fill="#c8c8c8" stroke="#252526" stroke-width="1.500" d="M20 1L26 3.700V23.500L20 26.200L9.700 16.500L3.500 21.200L1 20V7.300L3.500 6L9.700 10.800ZM3.800 10.800V16.500L7 13.600ZM19.500 9.500L14 13.600L19.500 17.700Z"/></g></svg>
<div class="t" style="left:1520px;top:206px;line-height:20px;font-size:15px;color:#f1f1f1;">解决方案<span class="l" style="font-size:16.05px;letter-spacing:0.253px">'PlatformTools' (13 </span>个项目<span class="l" style="font-size:16.05px;letter-spacing:0.253px">)</span></div>
<svg style="left:1492px;top:235.0px;" width="9" height="9" viewBox="0 0 9 9"><path d="M8.500 0.200V8.500H0.200Z" fill="#f1f1f1"/></svg>
<svg style="left:1517px;top:230.5px;" width="19" height="18" viewBox="0 0 19 18"><rect x="1.200" y="1.100" width="16.600" height="14.500" fill="none" stroke="#b888c4" stroke-width="1.400"/><path d="M6.600 1.900V9.100M3 5.500H10.200" stroke="#d6d6d6" stroke-width="2.600"/><path d="M13 7.600V14.800M9.400 11.200H16.600" stroke="#d6d6d6" stroke-width="2.600"/></svg>
<div class="t" style="left:1543px;top:229.5px;line-height:20px;font-size:15px;color:#f1f1f1;">服务核心</div>
<svg style="left:1514.5px;top:256.0px;" width="9" height="13" viewBox="0 0 9 13"><path d="M1.200 0.800L7.300 6.200L1.200 11.600Z" fill="none" stroke="#f1f1f1" stroke-width="1.300"/></svg>
<svg style="left:1540px;top:253.5px;" width="19" height="19" viewBox="0 0 19 19"><path d="M1.800 5.500H7.500L8.800 2.500H18V16H1.800Z" fill="#dcb67a"/><path d="M9.800 4.200H16.800" stroke="#252526" stroke-width="1"/><path d="M-0.200 12H7.400L4.500 15V18.200H2.700V15Z" fill="#d4d4d4" stroke="#252526" stroke-width=".800"/></svg>
<div class="t" style="left:1565px;top:252.5px;line-height:20px;font-size:15px;color:#f1f1f1;">头文件</div>
<svg style="left:1540px;top:276.5px;" width="19" height="19" viewBox="0 0 19 19"><path d="M1.800 5.500H7.500L8.800 2.500H18V10H1.800Z" fill="#dcb67a"/><path d="M1.800 10H10V15H1.800Z" fill="#dcb67a"/><path d="M9.800 4.200H16.800" stroke="#252526" stroke-width="1"/><rect x="9.600" y="8.100" width="8.200" height="8.200" fill="#163f5a" stroke="#2f8fcf" stroke-width="1.100"/><path d="M11.500 14.300L15.200 10.600M12.400 10.400H15.500V13.500" fill="none" stroke="#5ab4ee" stroke-width="1.100"/><path d="M-0.200 12H7.400L4.500 15V18.200H2.700V15Z" fill="#d4d4d4" stroke="#252526" stroke-width=".800"/></svg>
<div class="t" style="left:1565px;top:275.5px;line-height:20px;font-size:15px;color:#f1f1f1;">外部依赖项</div>
<svg style="left:1514.5px;top:302.0px;" width="9" height="13" viewBox="0 0 9 13"><path d="M1.200 0.800L7.300 6.200L1.200 11.600Z" fill="none" stroke="#f1f1f1" stroke-width="1.300"/></svg>
<svg style="left:1540px;top:299.5px;" width="19" height="19" viewBox="0 0 19 19"><path d="M1.800 5.500H7.500L8.800 2.500H18V16H1.800Z" fill="#dcb67a"/><path d="M9.800 4.200H16.800" stroke="#252526" stroke-width="1"/><path d="M-0.200 12H7.400L4.500 15V18.200H2.700V15Z" fill="#d4d4d4" stroke="#252526" stroke-width=".800"/></svg>
<div class="t" style="left:1565px;top:298.5px;line-height:20px;font-size:15px;color:#f1f1f1;">源文件</div>
<svg style="left:1514.5px;top:325.0px;" width="9" height="13" viewBox="0 0 9 13"><path d="M1.200 0.800L7.300 6.200L1.200 11.600Z" fill="none" stroke="#f1f1f1" stroke-width="1.300"/></svg>
<svg style="left:1540px;top:322.5px;" width="19" height="19" viewBox="0 0 19 19"><path d="M1.800 5.500H7.500L8.800 2.500H18V16H1.800Z" fill="#dcb67a"/><path d="M9.800 4.200H16.800" stroke="#252526" stroke-width="1"/><path d="M-0.200 12H7.400L4.500 15V18.200H2.700V15Z" fill="#d4d4d4" stroke="#252526" stroke-width=".800"/></svg>
<div class="t" style="left:1565px;top:321.5px;line-height:20px;font-size:15px;color:#f1f1f1;">资源文件</div>
<svg style="left:1492px;top:348.0px;" width="9" height="13" viewBox="0 0 9 13"><path d="M1.200 0.800L7.300 6.200L1.200 11.600Z" fill="none" stroke="#f1f1f1" stroke-width="1.300"/></svg>
<svg style="left:1517px;top:345.5px;" width="19" height="18" viewBox="0 0 19 18"><rect x="1.200" y="1.100" width="16.600" height="14.500" fill="none" stroke="#b888c4" stroke-width="1.400"/><path d="M6.600 1.900V9.100M3 5.500H10.200" stroke="#d6d6d6" stroke-width="2.600"/><path d="M13 7.600V14.800M9.400 11.200H16.600" stroke="#d6d6d6" stroke-width="2.600"/></svg>
<div class="t" style="left:1543px;top:344.5px;line-height:20px;font-size:15px;color:#f1f1f1;font-weight:bold;">管理工具</div>
<svg style="left:1492px;top:371.0px;" width="9" height="13" viewBox="0 0 9 13"><path d="M1.200 0.800L7.300 6.200L1.200 11.600Z" fill="none" stroke="#f1f1f1" stroke-width="1.300"/></svg>
<svg style="left:1517px;top:368.5px;" width="19" height="18" viewBox="0 0 19 18"><rect x="1.200" y="1.100" width="16.600" height="14.500" fill="none" stroke="#b888c4" stroke-width="1.400"/><path d="M6.600 1.900V9.100M3 5.500H10.200" stroke="#d6d6d6" stroke-width="2.600"/><path d="M13 7.600V14.800M9.400 11.200H16.600" stroke="#d6d6d6" stroke-width="2.600"/></svg>
<div class="t" style="left:1543px;top:367.5px;line-height:20px;font-size:15px;color:#f1f1f1;">界面控件</div>
<svg style="left:1492px;top:394.0px;" width="9" height="13" viewBox="0 0 9 13"><path d="M1.200 0.800L7.300 6.200L1.200 11.600Z" fill="none" stroke="#f1f1f1" stroke-width="1.300"/></svg>
<svg style="left:1517px;top:391.5px;" width="19" height="18" viewBox="0 0 19 18"><rect x="1.200" y="1.100" width="16.600" height="14.500" fill="none" stroke="#b888c4" stroke-width="1.400"/><path d="M6.600 1.900V9.100M3 5.500H10.200" stroke="#d6d6d6" stroke-width="2.600"/><path d="M13 7.600V14.800M9.400 11.200H16.600" stroke="#d6d6d6" stroke-width="2.600"/></svg>
<div class="t" style="left:1543px;top:390.5px;line-height:20px;font-size:15px;color:#f1f1f1;">平台数据</div>
<svg style="left:1492px;top:417.0px;" width="9" height="13" viewBox="0 0 9 13"><path d="M1.200 0.800L7.300 6.200L1.200 11.600Z" fill="none" stroke="#f1f1f1" stroke-width="1.300"/></svg>
<svg style="left:1517px;top:414.5px;" width="19" height="18" viewBox="0 0 19 18"><rect x="1.200" y="1.100" width="16.600" height="14.500" fill="none" stroke="#b888c4" stroke-width="1.400"/><path d="M6.600 1.900V9.100M3 5.500H10.200" stroke="#d6d6d6" stroke-width="2.600"/><path d="M13 7.600V14.800M9.400 11.200H16.600" stroke="#d6d6d6" stroke-width="2.600"/></svg>
<div class="t" style="left:1543px;top:413.5px;line-height:20px;font-size:15px;color:#f1f1f1;">平台资源</div>
<svg style="left:1492px;top:440.0px;" width="9" height="13" viewBox="0 0 9 13"><path d="M1.200 0.800L7.300 6.200L1.200 11.600Z" fill="none" stroke="#f1f1f1" stroke-width="1.300"/></svg>
<svg style="left:1517px;top:437.5px;" width="19" height="18" viewBox="0 0 19 18"><rect x="1.200" y="1.100" width="16.600" height="14.500" fill="none" stroke="#b888c4" stroke-width="1.400"/><path d="M6.600 1.900V9.100M3 5.500H10.200" stroke="#d6d6d6" stroke-width="2.600"/><path d="M13 7.600V14.800M9.400 11.200H16.600" stroke="#d6d6d6" stroke-width="2.600"/></svg>
<div class="t" style="left:1543px;top:436.5px;line-height:20px;font-size:15px;color:#f1f1f1;">图像控件</div>
<svg style="left:1492px;top:463.0px;" width="9" height="13" viewBox="0 0 9 13"><path d="M1.200 0.800L7.300 6.200L1.200 11.600Z" fill="none" stroke="#f1f1f1" stroke-width="1.300"/></svg>
<svg style="left:1517px;top:460.5px;" width="19" height="18" viewBox="0 0 19 18"><rect x="1.200" y="1.100" width="16.600" height="14.500" fill="none" stroke="#b888c4" stroke-width="1.400"/><path d="M6.600 1.900V9.100M3 5.500H10.200" stroke="#d6d6d6" stroke-width="2.600"/><path d="M13 7.600V14.800M9.400 11.200H16.600" stroke="#d6d6d6" stroke-width="2.600"/></svg>
<div class="t" style="left:1543px;top:459.5px;line-height:20px;font-size:15px;color:#f1f1f1;">图形工厂</div>
<svg style="left:1492px;top:488.0px;" width="9" height="9" viewBox="0 0 9 9"><path d="M8.500 0.200V8.500H0.200Z" fill="#f1f1f1"/></svg>
<svg style="left:1517px;top:483.5px;" width="19" height="18" viewBox="0 0 19 18"><rect x="1.200" y="1.100" width="16.600" height="14.500" fill="none" stroke="#b888c4" stroke-width="1.400"/><path d="M6.600 1.900V9.100M3 5.500H10.200" stroke="#d6d6d6" stroke-width="2.600"/><path d="M13 7.600V14.800M9.400 11.200H16.600" stroke="#d6d6d6" stroke-width="2.600"/></svg>
<div class="t" style="left:1543px;top:482.5px;line-height:20px;font-size:15px;color:#f1f1f1;">网络服务</div>
<svg style="left:1514.5px;top:509.0px;" width="9" height="13" viewBox="0 0 9 13"><path d="M1.200 0.800L7.300 6.200L1.200 11.600Z" fill="none" stroke="#f1f1f1" stroke-width="1.300"/></svg>
<svg style="left:1540px;top:506.5px;" width="19" height="19" viewBox="0 0 19 19"><path d="M1.800 5.500H7.500L8.800 2.500H18V16H1.800Z" fill="#dcb67a"/><path d="M9.800 4.200H16.800" stroke="#252526" stroke-width="1"/><path d="M-0.200 12H7.400L4.500 15V18.200H2.700V15Z" fill="#d4d4d4" stroke="#252526" stroke-width=".800"/></svg>
<div class="t" style="left:1565px;top:505.5px;line-height:20px;font-size:15px;color:#f1f1f1;">头文件</div>
<svg style="left:1540px;top:529.5px;" width="19" height="19" viewBox="0 0 19 19"><path d="M1.800 5.500H7.500L8.800 2.500H18V10H1.800Z" fill="#dcb67a"/><path d="M1.800 10H10V15H1.800Z" fill="#dcb67a"/><path d="M9.800 4.200H16.800" stroke="#252526" stroke-width="1"/><rect x="9.600" y="8.100" width="8.200" height="8.200" fill="#163f5a" stroke="#2f8fcf" stroke-width="1.100"/><path d="M11.500 14.300L15.200 10.600M12.400 10.400H15.500V13.500" fill="none" stroke="#5ab4ee" stroke-width="1.100"/><path d="M-0.200 12H7.400L4.500 15V18.200H2.700V15Z" fill="#d4d4d4" stroke="#252526" stroke-width=".800"/></svg>
<div class="t" style="left:1565px;top:528.5px;line-height:20px;font-size:15px;color:#f1f1f1;">外部依赖项</div>
<svg style="left:1514.5px;top:557.0px;" width="9" height="9" viewBox="0 0 9 9"><path d="M8.500 0.200V8.500H0.200Z" fill="#f1f1f1"/></svg>
<svg style="left:1540px;top:552.5px;" width="19" height="19" viewBox="0 0 19 19"><path d="M2.500 13V6.200H7.300L8.800 3.200H17.300V15.300H15" fill="none" stroke="#dcb67a" stroke-width="1.500"/><path d="M5.500 15.600L8.200 10.500H13.500L15.500 15.600Z" fill="#dcb67a"/><path d="M-0.200 12H7.400L4.500 15V18.200H2.700V15Z" fill="#d4d4d4" stroke="#252526" stroke-width=".800"/></svg>
<div class="t" style="left:1565px;top:551.5px;line-height:20px;font-size:15px;color:#f1f1f1;">源文件</div>
<svg style="left:1563px;top:578.5px;" width="17" height="13" viewBox="0 0 17 13"><path d="M4 1.200V8.200M0.500 4.700H7.500" stroke="#c586c0" stroke-width="2.500"/><path d="M12.500 3.300V10.300M9 6.800H16" stroke="#c586c0" stroke-width="2.500"/></svg>
<div class="t" style="left:1588px;top:574.5px;line-height:20px;font-size:15px;color:#f1f1f1;"><span class="l" style="font-size:16.05px;letter-spacing:0.192px">stdafx.cpp</span></div>
<svg style="left:1563px;top:601.5px;" width="17" height="13" viewBox="0 0 17 13"><path d="M4 1.200V8.200M0.500 4.700H7.500" stroke="#c586c0" stroke-width="2.500"/><path d="M12.500 3.300V10.300M9 6.800H16" stroke="#c586c0" stroke-width="2.500"/></svg>
<div class="t" style="left:1588px;top:597.5px;line-height:20px;font-size:15px;color:#f1f1f1;"><span class="l" style="font-size:16.05px;letter-spacing:-0.183px">TCPSocket.cpp</span></div>
<svg style="left:1563px;top:624.5px;" width="17" height="13" viewBox="0 0 17 13"><path d="M4 1.200V8.200M0.500 4.700H7.500" stroke="#c586c0" stroke-width="2.500"/><path d="M12.500 3.300V10.300M9 6.800H16" stroke="#c586c0" stroke-width="2.500"/></svg>
<div class="t" style="left:1588px;top:620.5px;line-height:20px;font-size:15px;color:#f1f1f1;"><span class="l" style="font-size:16.05px;letter-spacing:-0.09px">UDPSocket.cpp</span></div>
<svg style="left:1563px;top:647.5px;" width="17" height="13" viewBox="0 0 17 13"><path d="M4 1.200V8.200M0.500 4.700H7.500" stroke="#c586c0" stroke-width="2.500"/><path d="M12.500 3.300V10.300M9 6.800H16" stroke="#c586c0" stroke-width="2.500"/></svg>
<div class="t" style="left:1588px;top:643.5px;line-height:20px;font-size:15px;color:#f1f1f1;"><span class="l" style="font-size:16.05px;letter-spacing:0.399px">WHNetwork.cpp</span></div>
<svg style="left:1563px;top:670.5px;" width="17" height="13" viewBox="0 0 17 13"><path d="M4 1.200V8.200M0.500 4.700H7.500" stroke="#c586c0" stroke-width="2.500"/><path d="M12.500 3.300V10.300M9 6.800H16" stroke="#c586c0" stroke-width="2.500"/></svg>
<div class="t" style="left:1588px;top:666.5px;line-height:20px;font-size:15px;color:#f1f1f1;"><span class="l" style="font-size:16.05px;letter-spacing:0.164px">WHSocket.cpp</span></div>
<svg style="left:1514.5px;top:693.0px;" width="9" height="13" viewBox="0 0 9 13"><path d="M1.200 0.800L7.300 6.200L1.200 11.600Z" fill="none" stroke="#f1f1f1" stroke-width="1.300"/></svg>
<svg style="left:1540px;top:690.5px;" width="19" height="19" viewBox="0 0 19 19"><path d="M1.800 5.500H7.500L8.800 2.500H18V16H1.800Z" fill="#dcb67a"/><path d="M9.800 4.200H16.800" stroke="#252526" stroke-width="1"/><path d="M-0.200 12H7.400L4.500 15V18.200H2.700V15Z" fill="#d4d4d4" stroke="#252526" stroke-width=".800"/></svg>
<div class="t" style="left:1565px;top:689.5px;line-height:20px;font-size:15px;color:#f1f1f1;">资源文件</div>
<svg style="left:1542px;top:713.5px;" width="14" height="17" viewBox="0 0 14 17"><path d="M1.400 1.500H8.500L12.500 5.500V15.800H1.400Z" fill="none" stroke="#c8c8c8" stroke-width="1.500"/><path d="M8.300 1.500V5.700H12.500" fill="none" stroke="#c8c8c8" stroke-width="1.200"/><path d="M3.500 6H7M3.500 8.500H10.500M3.500 11H10.500M3.500 13.500H10.500" stroke="#c8c8c8" stroke-width="1.300"/></svg>
<div class="t" style="left:1565px;top:712.5px;line-height:20px;font-size:15px;color:#f1f1f1;"><span class="l" style="font-size:16.05px;letter-spacing:0.202px">ReadMe.txt</span></div>
<svg style="left:1492px;top:739.0px;" width="9" height="13" viewBox="0 0 9 13"><path d="M1.200 0.800L7.300 6.200L1.200 11.600Z" fill="none" stroke="#f1f1f1" stroke-width="1.300"/></svg>
<svg style="left:1517px;top:736.5px;" width="19" height="18" viewBox="0 0 19 18"><rect x="1.200" y="1.100" width="16.600" height="14.500" fill="none" stroke="#b888c4" stroke-width="1.400"/><path d="M6.600 1.900V9.100M3 5.500H10.200" stroke="#d6d6d6" stroke-width="2.600"/><path d="M13 7.600V14.800M9.400 11.200H16.600" stroke="#d6d6d6" stroke-width="2.600"/></svg>
<div class="t" style="left:1543px;top:735.5px;line-height:20px;font-size:15px;color:#f1f1f1;">下载组件</div>
<svg style="left:1492px;top:762.0px;" width="9" height="13" viewBox="0 0 9 13"><path d="M1.200 0.800L7.300 6.200L1.200 11.600Z" fill="none" stroke="#f1f1f1" stroke-width="1.300"/></svg>
<svg style="left:1517px;top:759.5px;" width="19" height="18" viewBox="0 0 19 18"><rect x="1.200" y="1.100" width="16.600" height="14.500" fill="none" stroke="#b888c4" stroke-width="1.400"/><path d="M6.600 1.900V9.100M3 5.500H10.200" stroke="#d6d6d6" stroke-width="2.600"/><path d="M13 7.600V14.800M9.400 11.200H16.600" stroke="#d6d6d6" stroke-width="2.600"/></svg>
<div class="t" style="left:1543px;top:758.5px;line-height:20px;font-size:15px;color:#f1f1f1;">形象组件</div>
<svg style="left:1492px;top:785.0px;" width="9" height="13" viewBox="0 0 9 13"><path d="M1.200 0.800L7.300 6.200L1.200 11.600Z" fill="none" stroke="#f1f1f1" stroke-width="1.300"/></svg>
<svg style="left:1517px;top:782.5px;" width="19" height="18" viewBox="0 0 19 18"><rect x="1.200" y="1.100" width="16.600" height="14.500" fill="none" stroke="#b888c4" stroke-width="1.400"/><path d="M6.600 1.900V9.100M3 5.500H10.200" stroke="#d6d6d6" stroke-width="2.600"/><path d="M13 7.600V14.800M9.400 11.200H16.600" stroke="#d6d6d6" stroke-width="2.600"/></svg>
<div class="t" style="left:1543px;top:781.5px;line-height:20px;font-size:15px;color:#f1f1f1;">用户服务</div>
<svg style="left:1492px;top:808.0px;" width="9" height="13" viewBox="0 0 9 13"><path d="M1.200 0.800L7.300 6.200L1.200 11.600Z" fill="none" stroke="#f1f1f1" stroke-width="1.300"/></svg>
<svg style="left:1517px;top:805.5px;" width="19" height="18" viewBox="0 0 19 18"><rect x="1.200" y="1.100" width="16.600" height="14.500" fill="none" stroke="#b888c4" stroke-width="1.400"/><path d="M6.600 1.900V9.100M3 5.500H10.200" stroke="#d6d6d6" stroke-width="2.600"/><path d="M13 7.600V14.800M9.400 11.200H16.600" stroke="#d6d6d6" stroke-width="2.600"/></svg>
<div class="t" style="left:1543px;top:804.5px;line-height:20px;font-size:15px;color:#f1f1f1;">游戏道具</div>
<svg style="left:1492px;top:831.0px;" width="9" height="13" viewBox="0 0 9 13"><path d="M1.200 0.800L7.300 6.200L1.200 11.600Z" fill="none" stroke="#f1f1f1" stroke-width="1.300"/></svg>
<svg style="left:1517px;top:828.5px;" width="19" height="18" viewBox="0 0 19 18"><rect x="1.200" y="1.100" width="16.600" height="14.500" fill="none" stroke="#b888c4" stroke-width="1.400"/><path d="M6.600 1.900V9.100M3 5.500H10.200" stroke="#d6d6d6" stroke-width="2.600"/><path d="M13 7.600V14.800M9.400 11.200H16.600" stroke="#d6d6d6" stroke-width="2.600"/></svg>
<div class="t" style="left:1543px;top:827.5px;line-height:20px;font-size:15px;color:#f1f1f1;">游戏控件</div>
<div style="left:1478px;top:968px;width:150px;height:25px;background:#252526;border:1px solid #3f3f46;border-top:none;"></div>
<div class="t" style="left:1485px;top:970.5px;line-height:20px;font-size:15px;color:#0097fb;">解决方案资源管理器</div>
<div class="t" style="left:1634px;top:971px;line-height:20px;font-size:15px;color:#d0d0d0;">团队资源管理器</div>
<div class="t" style="left:1751px;top:971px;line-height:20px;font-size:15px;color:#d0d0d0;">类视图</div>
<div class="t" style="left:1810px;top:971px;line-height:20px;font-size:15px;color:#d0d0d0;">资源视图</div>
<div style="left:0px;top:1000px;width:1920px;height:31px;background:#007acc;"></div>
<div class="t" style="left:5px;top:1005.5px;line-height:20px;font-size:15px;color:#fff;">正在分析包含文件<span class="l" style="font-size:16.05px;letter-spacing:0.155px">... (503</span>，共<span class="l" style="font-size:16.05px;letter-spacing:0.155px"> 533) - c:\Program Files (x86)\Windows Kits\8.1\Include\shared\dxgiformat.h</span></div>
<div class="t" style="left:1477px;top:1005.5px;line-height:20px;font-size:15px;color:#fff;">行<span class="l" style="font-size:16.05px;letter-spacing:-0.055px"> 104</span></div>
<div class="t" style="left:1592px;top:1005.5px;line-height:20px;font-size:15px;color:#fff;">列<span class="l" style="font-size:16.05px;letter-spacing:-0.104px"> 95</span></div>
<div class="t" style="left:1707px;top:1005.5px;line-height:20px;font-size:15px;color:#fff;">字符<span class="l" style="font-size:16.05px;letter-spacing:-0.104px"> 86</span></div>
<div class="t" style="left:1877px;top:1005.5px;line-height:20px;font-size:15px;color:#fff;"><span class="l" style="font-size:16.05px;letter-spacing:-0.464px">Ins</span></div>
<div class="t" style="left:1594px;top:926.5px;line-height:32px;font-size:25.2px;color:rgba(200,200,200,.62);font-weight:300;">激活<span class="l" style="font-size:23.94px;letter-spacing:1.607px"> Windows</span></div>
<div class="t" style="left:1594px;top:958px;line-height:24px;font-size:16.8px;color:rgba(200,200,200,.55);font-weight:300;">转到<span class="l" style="font-size:16.3px;letter-spacing:0.827px">“</span>设置<span class="l" style="font-size:16.3px;letter-spacing:0.827px">”</span>以激活<span class="l" style="font-size:16.3px;letter-spacing:0.827px"> Windows</span>。</div>
<div style="left:0px;top:1030px;width:60px;height:1px;background:#1f2326;"></div>
<div style="left:60px;top:1030px;width:430px;height:1px;background:#dcd0c4;"></div>
<div style="left:490px;top:1030px;width:1430px;height:1px;background:#1f2a30;"></div>
</body></html>
